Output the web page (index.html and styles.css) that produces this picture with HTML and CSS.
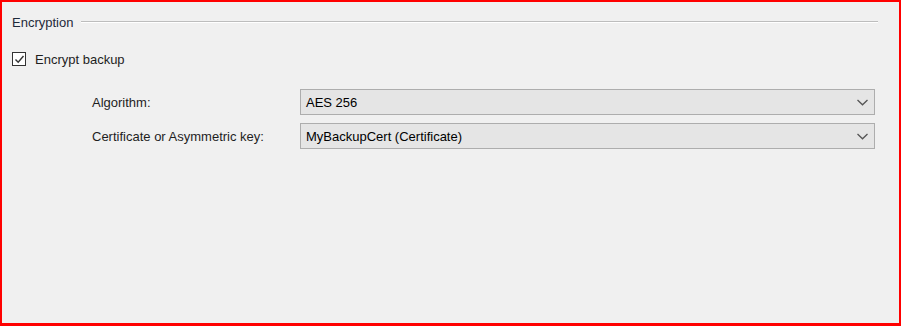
FILE: index.html
```html
<!DOCTYPE html>
<html lang="en">
<head>
    <meta charset="UTF-8">
    <title>Encryption</title>
    <link rel="stylesheet" href="styles.css">
</head>
<body>
    <div class="frame">
        <div class="group-header">
            <span class="group-title">Encryption</span>
            <span class="group-line"></span>
        </div>

        <label class="check-row">
            <span class="checkbox">
                <svg width="11" height="11" viewBox="0 0 11 11">
                    <polyline points="1.5,5.5 4.2,8.3 9.5,2" fill="none" stroke="#333" stroke-width="1.4"/>
                </svg>
            </span>
            <span>Encrypt backup</span>
        </label>

        <div class="options">
            <span class="field-label">Algorithm:</span>
            <div class="combo">
                <span>AES 256</span>
                <svg class="chevron" width="11" height="7" viewBox="0 0 11 7">
                    <polyline points="0.5,1 5.5,5.8 10.5,1" fill="none" stroke="#555" stroke-width="1.3"/>
                </svg>
            </div>

            <span class="field-label">Certificate or Asymmetric key:</span>
            <div class="combo">
                <span>MyBackupCert (Certificate)</span>
                <svg class="chevron" width="11" height="7" viewBox="0 0 11 7">
                    <polyline points="0.5,1 5.5,5.8 10.5,1" fill="none" stroke="#555" stroke-width="1.3"/>
                </svg>
            </div>
        </div>
    </div>
</body>
</html>
```

FILE: styles.css
```css
/* page */
body {
    margin: 0;
    padding: 0;
    background-color: #F0F0F0;
    font-family: "Liberation Sans", Arial, sans-serif;
    font-size: 13px;
    color: #1E1E1E;
}

.frame {
    box-sizing: border-box;
    width: 901px;
    height: 326px;
    border: 2px solid #FF0000;
    border-bottom-width: 3px;
    padding: 12px 24px 0 10px;
    background: #F0F0F0;
}

/* group header with etched line */
.group-header {
    display: flex;
    align-items: center;
    height: 16px;
    gap: 8px;
    margin-right: -3px;
}

.group-title {
    color: #1E2A3A;
}

.group-line {
    flex: 1;
    height: 1px;
    background: #BDBDBD;
    border-bottom: 1px solid #FFFFFF;
}

/* checkbox */
.check-row {
    display: flex;
    align-items: center;
    gap: 9px;
    height: 16px;
    margin-top: 21px;
}

.checkbox {
    box-sizing: border-box;
    width: 14px;
    height: 14px;
    border: 1px solid #333333;
    background: #FFFFFF;
    display: flex;
    align-items: center;
    justify-content: center;
}

/* combo rows */
.options {
    display: grid;
    grid-template-columns: 208px 1fr;
    grid-auto-rows: 26px;
    row-gap: 8px;
    align-items: center;
    margin-top: 22px;
    padding-left: 80px;
}

.field-label {
    color: #1E1E1E;
}

.combo {
    box-sizing: border-box;
    height: 26px;
    display: flex;
    align-items: center;
    justify-content: space-between;
    padding: 0 6px 0 5px;
    background: #E5E5E5;
    border: 1px solid #ADADAD;
    color: #000000;
}

.chevron {
    margin-top: 1px;
}
```
